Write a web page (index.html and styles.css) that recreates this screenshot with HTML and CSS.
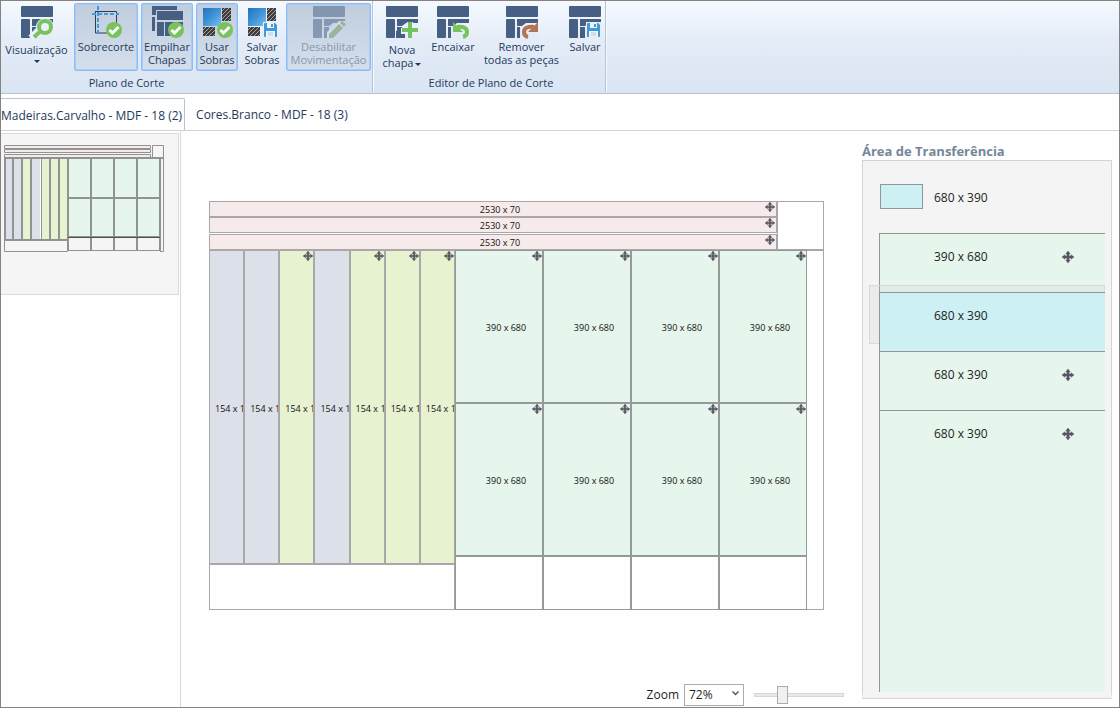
FILE: index.html
```html
<!DOCTYPE html>
<html lang="pt-BR">
  <head>
    <meta charset="UTF-8" />
    <meta name="viewport" content="width=device-width, initial-scale=1.0" />
    <title>Plano de Corte</title>
    <link rel="stylesheet" href="styles.css">
  </head>
  <body>
    <svg class="symbols" aria-hidden="true">
      <defs>
        <pattern id="hatch" width="4" height="4" patternUnits="userSpaceOnUse">
          <rect width="4" height="4" fill="#3f3d3d" />
          <path d="M-1 1l2-2M0 4l4-4M3 5l2-2" stroke="#a5a2a0" />
        </pattern>
        <linearGradient id="sheet" x1="0" y1="0" x2="1" y2="1">
          <stop offset="0" stop-color="#2472b8" />
          <stop offset=".5" stop-color="#3f93d8" />
          <stop offset="1" stop-color="#7cc0f0" />
        </linearGradient>
      </defs>
      <symbol id="board" viewBox="0 0 32 32">
        <rect width="32" height="11" rx="1" />
        <rect y="13" width="9" height="19" rx="1" />
        <path d="M11 13h21v4H20l-4 3h-5z" />
        <path d="M11 21h5v11h-5z" />
      </symbol>
      <symbol id="check" viewBox="0 0 16 16">
        <circle cx="8" cy="8" r="8" fill="#7ac25e" />
        <path d="M3.500 8l3 3 6-6" fill="none" stroke="#fff" stroke-width="3" />
      </symbol>
      <symbol id="disk" viewBox="0 0 13 14">
        <path d="M0 1q0-1 1-1h10l2 2v11q0 1-1 1H1q-1 0-1-1z" fill="#3c9add" />
        <path d="M3 0h7v5H3zM2 8h9v6H2z" fill="#eef3f7" />
        <path d="M7 1h2v3H7z" fill="#3c9add" />
        <path d="M4 10h5M4 12h5" stroke="#b9c4cc" />
      </symbol>
      <symbol id="scrap" viewBox="0 0 32 32">
        <rect y="2" width="18" height="18" fill="url(#sheet)" />
        <rect x="19" y="2" width="9" height="13" fill="url(#hatch)" />
        <rect y="21" width="12" height="9" fill="url(#hatch)" />
      </symbol>
      <symbol id="move" viewBox="0 0 12 12">
        <path d="M5 3H3.800L6 0l2.200 3H7v2h2V3.800L12 6 9 8.200V7H7v2h1.200L6 12 3.800 9H5V7H3v1.200L0 6l3-2.200V5h2z" fill="#5b5564" stroke="#5b5564" stroke-width=".5" />
      </symbol>
    </svg>

    <div class="window">
      <header class="ribbon">
        <section class="group">
          <div class="tools tools-plan">
            <button type="button" class="tool drop">
              <svg class="icon" viewBox="0 0 32 32">
                <use href="#board" />
                <path d="M10 32l8-8" stroke="#e9f1fa" stroke-width="7" />
                <circle cx="24" cy="21" r="9" fill="#e9f1fa" />
                <path d="M13 31l7-6" stroke="#7ac25e" stroke-width="4" />
                <circle cx="24" cy="21" r="6" fill="#e9f1fa" stroke="#7ac25e" stroke-width="4" />
              </svg>
              <span>Visualização</span>
              <i class="caret"></i>
            </button>
            <button type="button" class="tool active" aria-pressed="true">
              <svg class="icon" viewBox="0 0 32 32">
                <path d="M5 5.500h21.500V27H5.500V5" fill="none" stroke="#333b47" />
                <path d="M2 8h27M8 0v30" stroke="#3f9bdc" stroke-width="2" stroke-dasharray="4 2" />
                <use href="#check" x="16" y="16" width="16" height="16" />
              </svg>
              <span>Sobrecorte</span>
            </button>
            <button type="button" class="tool active" aria-pressed="true">
              <svg class="icon" viewBox="0 0 32 32">
                <path d="M1 0h25v4H5v5H1zM1 11h3v14H1z" />
                <path d="M6 5h26v9H6zM6 16h7v14H6zM14 16h18v4l-12 2v8h-6z" />
                <use href="#check" x="17" y="16" width="16" height="16" />
              </svg>
              <span>Empilhar<br>Chapas</span>
            </button>
            <button type="button" class="tool active" aria-pressed="true">
              <svg class="icon" viewBox="0 0 32 32">
                <use href="#scrap" x="2" width="32" height="32" />
                <use href="#check" x="16" y="16" width="16" height="16" />
              </svg>
              <span>Usar<br>Sobras</span>
            </button>
            <button type="button" class="tool">
              <svg class="icon" viewBox="0 0 32 32">
                <use href="#scrap" x="2" width="32" height="32" />
                <path d="M17 16h14v15H17z" fill="#e9f1fa" />
                <use href="#disk" x="18" y="17" width="13" height="14" />
              </svg>
              <span>Salvar<br>Sobras</span>
            </button>
            <button type="button" class="tool active" disabled>
              <svg class="icon" viewBox="0 0 32 32">
                <use href="#board" />
                <path d="M14 32v-6l12-11h6v5L20 32z" fill="#dbe4ee" />
                <path d="M16 32v-4l10-10 4 4-10 10zM27 17l2-2 4 3-2 3z" fill="#6f935a" />
              </svg>
              <span>Desabilitar<br>Movimentação</span>
            </button>
          </div>
          <h2>Plano de Corte</h2>
        </section>
        <section class="group">
          <div class="tools tools-editor">
            <button type="button" class="tool drop">
              <svg class="icon" viewBox="0 0 32 32">
                <use href="#board" />
                <path d="M10 25h9v7h-9z" />
                <path d="M21 32v-4h-6v-6h6v-6h6v6h5v6h-5v4z" fill="#e9f1fa" />
                <path d="M22 16h4v6h6v4h-6v6h-4v-6h-6v-4h6z" fill="#73c45e" />
              </svg>
              <span>Nova<br>chapa<i class="caret"></i></span>
            </button>
            <button type="button" class="tool">
              <svg class="icon" viewBox="0 0 32 32">
                <use href="#board" />
                <path d="M14 21h18v11H14z" fill="#e3ecf7" />
                <path d="M20 21q10-1 10 5 0 4-4 5" fill="none" stroke="#7ac25e" stroke-width="4" />
                <path d="M16 16v10h10z" fill="#7ac25e" />
              </svg>
              <span>Encaixar</span>
            </button>
            <button type="button" class="tool">
              <svg class="icon" viewBox="0 0 32 32">
                <use href="#board" />
                <path d="M14 21h18v11H14z" fill="#e3ecf7" />
                <path d="M28 21q-10-1-10 5 0 4 4 5" fill="none" stroke="#b27458" stroke-width="4" />
                <path d="M32 16v10H22z" fill="#b27458" />
              </svg>
              <span>Remover<br>todas as peças</span>
            </button>
            <button type="button" class="tool">
              <svg class="icon" viewBox="0 0 32 32">
                <use href="#board" />
                <path d="M17 16h15v16H17z" fill="#e3ecf7" />
                <use href="#disk" x="18" y="17" width="13" height="14" />
              </svg>
              <span>Salvar</span>
            </button>
          </div>
          <h2>Editor de Plano de Corte</h2>
        </section>
      </header>

      <nav class="tabs">
        <button type="button" class="tab selected">Madeiras.Carvalho - MDF - 18 (2)</button>
        <button type="button" class="tab">Cores.Branco - MDF - 18 (3)</button>
      </nav>

      <main class="content">
        <aside class="sheets">
          <button type="button" class="thumb" aria-label="Chapa 1">
            <svg viewBox="0 0 160 107" fill="none" stroke="#8f9493">
              <g fill="#f7eaea">
                <path d="M.5.500h146v3H.500zM.5 4.500h146v3H.500zM.5 9.500h146v3H.500z" />
              </g>
              <path d="M148.500.500h11v12h-11z" />
              <g stroke-width="2">
                <path d="M0 13h160" />
                <path d="M1 13h36v82H1z" fill="#dce0e9" />
                <path d="M18 13h9v82h-9zM37 13h27v82H37z" fill="#e7f2d1" />
                <path d="M64 13h92v79H64z" fill="#e6f6ec" />
                <path d="M9 13v82M46 13v82M55 13v82M87 13v92M110 13v92M133 13v92M64 53h92M64 92v13M156 13v93" />
              </g>
              <path d="M36.500 14v80" stroke="#fff" />
              <path d="M.5 95v11.500h63V95M64 105.500h92M156 106.500h3.500V13" />
              <path d="M64 92.500h92" stroke="#4d5251" />
            </svg>
          </button>
        </aside>

        <section class="workspace">
          <div class="canvas">
            <div class="plan">
              <div class="plan-top">
                <div class="strips">
                  <div class="piece pink"><span>2530 x 70</span><svg class="move"><use href="#move" /></svg></div>
                  <div class="piece pink"><span>2530 x 70</span><svg class="move"><use href="#move" /></svg></div>
                  <div class="piece pink"><span>2530 x 70</span><svg class="move"><use href="#move" /></svg></div>
                </div>
                <div class="piece"></div>
              </div>
              <div class="plan-main">
                <div class="bars-column">
                  <div class="bars">
                    <div class="piece blue"><span>154 x 14</span></div>
                    <div class="piece blue"><span>154 x 14</span></div>
                    <div class="piece lime"><span>154 x 14</span><svg class="move"><use href="#move" /></svg></div>
                    <div class="piece blue"><span>154 x 14</span></div>
                    <div class="piece lime"><span>154 x 14</span><svg class="move"><use href="#move" /></svg></div>
                    <div class="piece lime"><span>154 x 14</span><svg class="move"><use href="#move" /></svg></div>
                    <div class="piece lime"><span>154 x 14</span><svg class="move"><use href="#move" /></svg></div>
                  </div>
                  <div class="piece"></div>
                </div>
                <div class="cells">
                  <div class="piece mint"><span>390 x 680</span><svg class="move"><use href="#move" /></svg></div>
                  <div class="piece mint"><span>390 x 680</span><svg class="move"><use href="#move" /></svg></div>
                  <div class="piece mint"><span>390 x 680</span><svg class="move"><use href="#move" /></svg></div>
                  <div class="piece mint"><span>390 x 680</span><svg class="move"><use href="#move" /></svg></div>
                  <div class="piece mint"><span>390 x 680</span><svg class="move"><use href="#move" /></svg></div>
                  <div class="piece mint"><span>390 x 680</span><svg class="move"><use href="#move" /></svg></div>
                  <div class="piece mint"><span>390 x 680</span><svg class="move"><use href="#move" /></svg></div>
                  <div class="piece mint"><span>390 x 680</span><svg class="move"><use href="#move" /></svg></div>
                  <div class="piece"></div>
                  <div class="piece"></div>
                  <div class="piece"></div>
                  <div class="piece"></div>
                </div>
                <div class="piece rest"></div>
              </div>
            </div>
          </div>
          <div class="zoom">
            <label for="zoom-level">Zoom</label>
            <div class="select">
              <select id="zoom-level">
                <option>50%</option>
                <option selected>72%</option>
                <option>100%</option>
              </select>
              <svg viewBox="0 0 7 5"><path d="M.5.500l3 3 3-3" fill="none" stroke="#5b5564" stroke-width="1.500" /></svg>
            </div>
            <input type="range" min="0" max="100" value="29" aria-label="Zoom" />
          </div>
        </section>

        <aside class="transfer">
          <h2>Área de Transferência</h2>
          <ul class="transfer-list">
            <li><div class="shape small cyan"></div><span>680 x 390</span></li>
            <li><div class="shape mint"></div><span>390 x 680</span><svg class="handle"><use href="#move" /></svg></li>
            <li class="current"><div class="shape cyan"></div><span>680 x 390</span></li>
            <li><div class="shape mint"></div><span>680 x 390</span><svg class="handle"><use href="#move" /></svg></li>
            <li><div class="shape mint"></div><span>680 x 390</span><svg class="handle"><use href="#move" /></svg></li>
          </ul>
        </aside>
      </main>
    </div>
  </body>
</html>
```
FILE: styles.css
```css
* {
  box-sizing: border-box;
}
body {
  margin: 0;
  font-family: "Open Sans", "Noto Sans", sans-serif;
  font-size: 12px;
  line-height: 16px;
  color: #1e1e1e;
}
button,
select,
input {
  font: inherit;
  color: inherit;
  margin: 0;
}
h2 {
  margin: 0;
  font-size: 13px;
}
.symbols {
  position: absolute;
  width: 0;
  height: 0;
}
.window {
  display: flex;
  flex-direction: column;
  height: 100vh;
  min-height: 600px;
  border: 1px solid #858282;
  background: #fefefe;
}

/* ribbon */
.ribbon {
  display: flex;
  padding-bottom: 1px;
  border-bottom: 1px solid #b5c3d6;
  background: linear-gradient(#f5f9fe, #e3ecf7 45%, #dae5f3);
  color: #1e395b;
}
.group {
  display: flex;
  flex-direction: column;
  gap: 4px;
  padding: 2px 1px 1px;
  border-right: 1px solid #b5c3d6;
  box-shadow: 1px 0 #f7faff;
}
.group h2 {
  padding-right: 120px;
  font-size: 11px;
  font-weight: 400;
  text-align: center;
}
.group + .group {
  padding-left: 5px;
}
.group + .group h2 {
  padding-right: 0;
}
.tools {
  display: grid;
  gap: 3px;
}
.tools-plan {
  grid-template-columns: 69px 64px 52px 42px 42px 85px;
}
.tools-editor {
  grid-template-columns: 48px 48px 83px 38px;
}
.tool {
  display: flex;
  flex-direction: column;
  align-items: center;
  height: 68px;
  padding: 2px 0 0;
  border: 1px solid transparent;
  border-radius: 2px;
  background: none;
  font-size: 11px;
  line-height: 13px;
  white-space: nowrap;
}
.tool span {
  padding-top: 2px;
}
.tool.drop span {
  padding-top: 5px;
}
.tool.active {
  border-color: #8dbdf8;
  box-shadow: inset 0 0 0 1px #a9cbf5;
  background: linear-gradient(#bfcddd, #d5dfec);
}
.tool:disabled {
  color: #8797aa;
}
.tool:disabled .icon {
  opacity: 0.5;
}
.icon {
  flex: none;
  width: 32px;
  height: 32px;
  overflow: visible;
  fill: #475f82;
}
.caret {
  display: inline-block;
  border: 3px solid transparent;
  border-top-color: #1e395b;
  border-bottom: 0;
}
.tool > .caret {
  margin-top: 4px;
}
span .caret {
  margin-left: 2px;
  vertical-align: middle;
}

/* tabs */
.tabs {
  display: flex;
  padding-top: 4px;
  border-bottom: 1px solid #d4d4d4;
}
.tab {
  height: 32px;
  padding: 2px 11px 0;
  border: 0;
  background: none;
  font-size: 12px;
  color: #1e395b;
}
.tab.selected {
  padding-right: 2px;
  padding-left: 0;
  border: solid #b5c3d6;
  border-width: 1px 1px 0 0;
  border-radius: 0 2px 0 0;
}

/* sheet list */
.content {
  display: flex;
  flex: 1;
  min-height: 0;
}
.sheets {
  flex: none;
  width: 180px;
  padding: 2px 1px 0 0;
  border-right: 1px solid #dadada;
}
.thumb {
  display: block;
  width: 100%;
  padding: 11px 14px 42px 3px;
  border: 1px solid #dadada;
  border-left: 0;
  background: #f5f5f5;
}
.thumb svg {
  display: block;
  width: 100%;
}

/* cutting plan */
.workspace {
  display: flex;
  flex: 1;
  flex-direction: column;
  min-width: 0;
}
.canvas {
  display: flex;
  flex: 1;
  align-items: center;
  padding: 0 28px 2px;
}
.plan {
  display: grid;
  grid-template-rows: minmax(0, 49fr) minmax(0, 360fr);
  flex: 1;
  aspect-ratio: 615 / 409;
  font-size: 9px;
  line-height: 12px;
  color: #111;
}
.plan-top {
  display: grid;
  grid-template-rows: minmax(0, 1fr);
  grid-template-columns: 568fr 47fr;
}
.strips {
  display: grid;
  grid-template-rows: repeat(2, minmax(0, 16fr)) minmax(0, 17fr);
}
.plan-main {
  display: grid;
  grid-template-columns: 246fr 352fr 17fr;
}
.bars-column {
  display: grid;
  grid-template-rows: 314fr 46fr;
}
.bars {
  display: grid;
  grid-template-columns: repeat(7, 1fr);
}
.cells {
  display: grid;
  grid-template-columns: repeat(4, 1fr);
  grid-template-rows: 153fr 153fr 54fr;
}
.piece {
  position: relative;
  display: flex;
  align-items: center;
  justify-content: center;
  min-width: 0;
  min-height: 0;
  padding: 4px 0 0 14px;
  overflow: hidden;
  border: 1px solid #a8a8a8;
  white-space: nowrap;
}
.strips .piece {
  padding-top: 2px;
}
.strips .piece:last-child {
  margin-top: 1px;
}
.bars .piece {
  justify-content: flex-start;
  padding-left: 5px;
}
.cells .piece {
  border-color: #949a97;
}
.piece.rest {
  border-left: 0;
}
.pink {
  background: #f7eaea;
}
.blue {
  background: #dce0e9;
}
.lime {
  background: #e7f2d1;
}
.mint {
  background: #e6f6ec;
}
.cyan {
  background: #ccf0f4;
}
.move {
  position: absolute;
  top: 0;
  right: 0;
  width: 10px;
  height: 10px;
}
.strips .move {
  right: 1px;
}

/* zoom bar */
.zoom {
  display: flex;
  align-items: center;
  justify-content: flex-end;
  padding: 3px 8px 1px;
}
.select {
  position: relative;
  margin: 0 10px 0 5px;
}
.select select {
  display: block;
  width: 60px;
  height: 22px;
  padding: 0 4px;
  appearance: none;
  border: 1px solid #acacac;
  border-radius: 0;
  background: #fff;
}
.select svg {
  position: absolute;
  top: 7px;
  right: 5px;
  width: 7px;
  height: 5px;
  pointer-events: none;
}
input[type="range"] {
  width: 90px;
  height: 18px;
  appearance: none;
  background: none;
}
input[type="range"]::-webkit-slider-runnable-track {
  height: 4px;
  border: 1px solid #d6d6d6;
  background: #e7eaea;
}
input[type="range"]::-webkit-slider-thumb {
  width: 11px;
  height: 18px;
  margin-top: -8px;
  appearance: none;
  border: 1px solid #acacac;
  background: #f0f0f0;
}

/* transfer area */
.transfer {
  display: flex;
  flex: none;
  flex-direction: column;
  gap: 1px;
  width: 267px;
  padding: 12px 7px 9px 10px;
}
.transfer h2 {
  color: #74879a;
}
.transfer-list {
  flex: 1;
  min-height: 0;
  margin: 0;
  padding: 6px 6px 0;
  overflow: hidden;
  border: solid #d4d4d4;
  border-width: 1px 1px 6px;
  border-bottom-color: #f4f4f4;
  background: #f4f4f4;
  box-shadow: 0 1px #d4d4d4;
  list-style: none;
}
.transfer-list li {
  position: relative;
  display: flex;
  align-items: center;
  justify-content: space-between;
  height: 59px;
  padding: 2px 31px 0 65px;
}
.transfer-list .current {
  background: rgba(200, 200, 200, 0.2);
  box-shadow: inset 0 0 0 1px #dadada;
}
.transfer-list span,
.handle {
  position: relative;
}
.handle {
  width: 12px;
  height: 12px;
}
.shape {
  position: absolute;
  top: 7px;
  right: 0;
  left: 10px;
  height: 600px;
  border: solid #8f9895;
  border-width: 1px 0 0 1px;
}
.shape.small {
  top: 17px;
  right: auto;
  left: 11px;
  width: 43px;
  height: 25px;
  border-width: 1px;
}
```
